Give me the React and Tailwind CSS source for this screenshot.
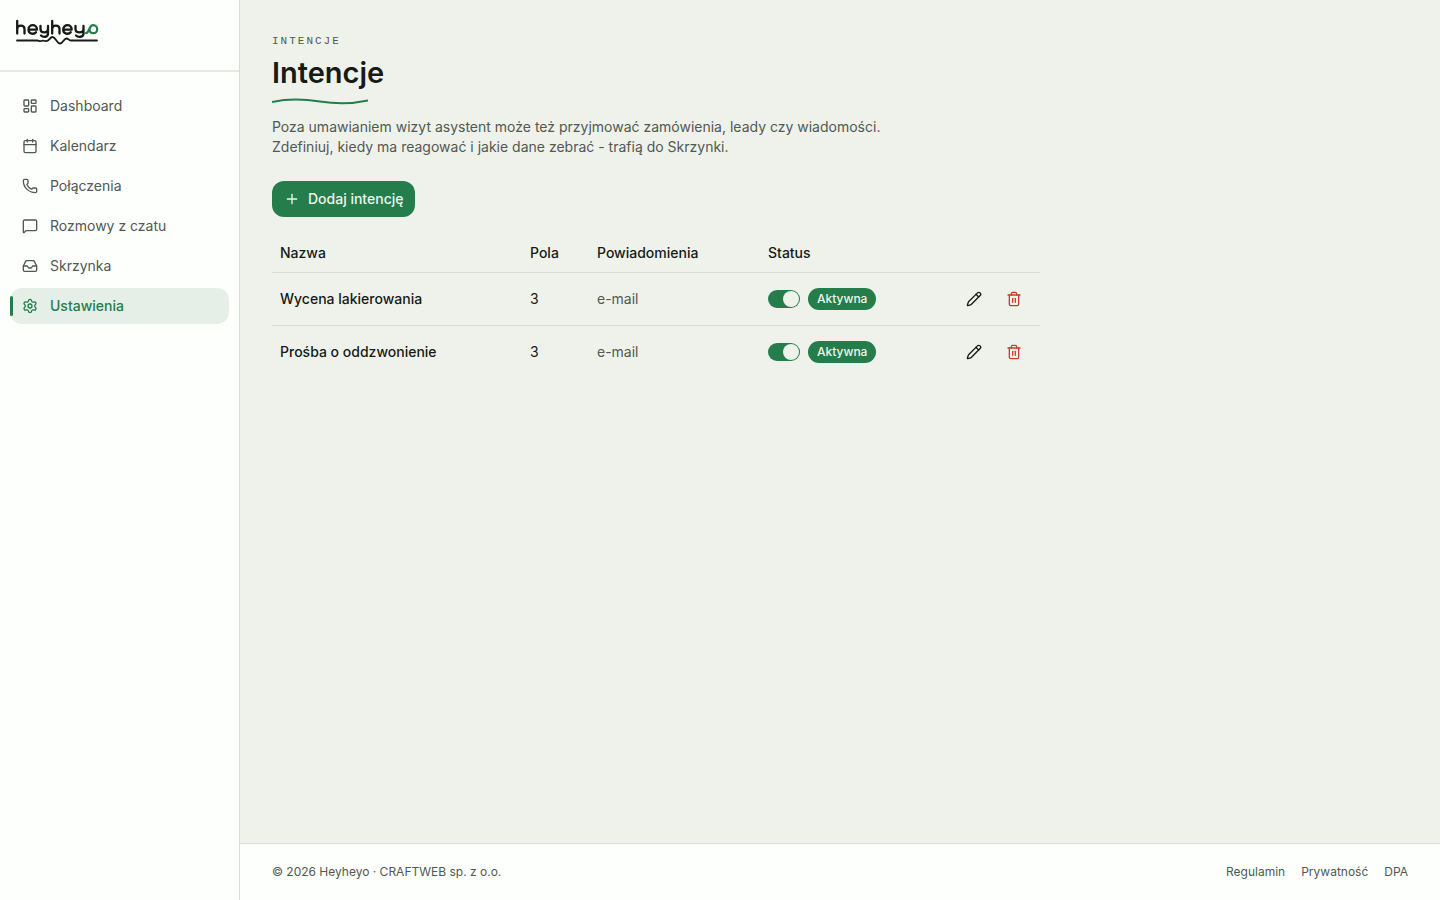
import React from "react";
import {
  Calendar,
  Inbox,
  LayoutDashboard,
  MessageSquare,
  Pencil,
  Phone,
  Plus,
  Settings,
  Trash2,
} from "lucide-react";

const navItems = [
  { label: "Dashboard", icon: LayoutDashboard },
  { label: "Kalendarz", icon: Calendar },
  { label: "Połączenia", icon: Phone },
  { label: "Rozmowy z czatu", icon: MessageSquare },
  { label: "Skrzynka", icon: Inbox },
  { label: "Ustawienia", icon: Settings, active: true },
];

const intents = [
  { name: "Wycena lakierowania", fields: 3, notify: "e-mail" },
  { name: "Prośba o oddzwonienie", fields: 3, notify: "e-mail" },
];

const footerLinks = ["Regulamin", "Prywatność", "DPA"];

// Wordmark with the voice wave underneath
const Logo = () => (
  <svg width="84" height="28" viewBox="0 0 84 28" fill="none" aria-label="heyheyo">
    <g stroke="#171a17" strokeWidth="2.3" strokeLinecap="round" strokeLinejoin="round">
      <path d="M1.200 3v12.500M1.200 11C1.200 6.500 8.500 6.500 8.500 11v4.500" />
      <path d="M12.500 11.700h8.500c0-6-8.500-6-8.500 0 0 4.500 5.500 5 7.500 2.500" />
      <path d="M24.500 8v3c0 4.500 7.500 4.500 7.500 0V8M32 11v4.500c0 4-5 4-7 2" />
      <path d="M36.200 3v12.500M36.200 11c0-4.500 7.300-4.500 7.300 0v4.500" />
      <path d="M47.200 11.700h8.500c0-6-8.500-6-8.500 0 0 4.500 5.500 5 7.500 2.500" />
      <path d="M59.500 8v3c0 4.500 8 4.500 8 0V8M67.500 11v4.500c0 4-5.500 4-7.500 2" />
    </g>
    <path
      d="M70 15.200c3.500 0 2.500-8 7.200-8 5.300 0 5.300 8 0 8-3.500 0-4.200-3-3.200-5.200"
      stroke="#257d4c"
      strokeWidth="2.2"
      strokeLinecap="round"
    />
    <path
      d="M1 22.500h20c2 0 2.500 1 4 .5s2.500-.5 4 0c4 1.500 4.500-4 7.500-4 3.500 0 4 6.500 7.500 6.500s3.500-5 6.500-5c2 0 2 2 4.500 2h26"
      stroke="#171a17"
      strokeWidth="1.8"
      strokeLinecap="round"
    />
  </svg>
);

const Sidebar = () => (
  <aside className="w-60 shrink-0 border-r border-[#d8dcd2] bg-[#fdfffc]">
    <div className="h-18 border-b-2 border-[#e9e9df] px-4 pt-[18px]">
      <a href="#" className="block w-fit">
        <Logo />
      </a>
    </div>
    <nav className="flex flex-col gap-1 px-[10px] py-4">
      {navItems.map(({ label, icon: Icon, active }) => (
        <a
          key={label}
          href="#"
          aria-current={active ? "page" : undefined}
          className={
            active
              ? "relative flex h-9 items-center gap-3 rounded-xl bg-[#e5efe7] px-3 text-sm font-medium text-[#257d4c]"
              : "flex h-9 items-center gap-3 rounded-xl px-3 text-sm text-[#525852]"
          }
        >
          {active && (
            <span className="absolute top-2 bottom-2 left-0 w-[3px] rounded-full bg-[#257d4c]" />
          )}
          <Icon size={16} strokeWidth={2} />
          {label}
        </a>
      ))}
    </nav>
  </aside>
);

const StatusSwitch = ({ name }) => (
  <label className="relative inline-flex h-[18px] w-8 items-center">
    <input
      type="checkbox"
      role="switch"
      defaultChecked
      aria-label={"Aktywna: " + name}
      className="peer absolute inset-0 appearance-none rounded-full bg-[#c9cec6] checked:bg-[#257d4c]"
    />
    <span className="relative ml-px size-4 rounded-full bg-[#eef2ea] peer-checked:ml-[15px]" />
  </label>
);

const IntentsTable = () => (
  <table className="w-full max-w-[768px] table-fixed text-left text-sm text-[#171a17]">
    <thead>
      <tr className="h-10 border-b border-[#d8dcd2]">
        <th className="w-[250px] px-2 pt-0.5 font-medium">Nazwa</th>
        <th className="w-[67px] px-2 pt-0.5 font-medium">Pola</th>
        <th className="w-[171px] px-2 pt-0.5 font-medium">Powiadomienia</th>
        <th className="px-2 pt-0.5 font-medium">Status</th>
        <th className="w-[100px] px-2" aria-label="Akcje" />
      </tr>
    </thead>
    <tbody>
      {intents.map((intent) => (
        <tr
          key={intent.name}
          className="h-[53px] border-b border-[#d8dcd2] last:border-0"
        >
          <td className="px-2 font-medium">{intent.name}</td>
          <td className="px-2">{intent.fields}</td>
          <td className="px-2 text-[#525852]">{intent.notify}</td>
          <td className="px-2">
            <div className="flex items-center gap-2">
              <StatusSwitch name={intent.name} />
              <span className="flex h-[22px] items-center rounded-full bg-[#257d4c] px-[9px] text-xs font-medium text-[#eef6ee]">
                Aktywna
              </span>
            </div>
          </td>
          <td className="px-2">
            <div className="flex justify-end gap-1">
              <button
                type="button"
                aria-label="Edytuj"
                className="flex size-9 items-center justify-center rounded-xl"
              >
                <Pencil size={16} strokeWidth={2} />
              </button>
              <button
                type="button"
                aria-label="Usuń"
                className="flex size-9 items-center justify-center rounded-xl text-[#c8402c]"
              >
                <Trash2 size={16} strokeWidth={2} />
              </button>
            </div>
          </td>
        </tr>
      ))}
    </tbody>
  </table>
);

const App = () => {
  return (
    <div className="flex min-h-screen bg-[#eef2ea] font-['Inter',sans-serif]">
      <Sidebar />
      <div className="flex min-w-0 flex-1 flex-col">
        <main className="flex-1 px-8 pt-8">
          <p className="font-['Liberation_Mono',monospace] text-[11px] leading-[18px] tracking-[2px] text-[#525852] uppercase">
            Intencje
          </p>
          <h1 className="mt-[5px] text-[29px] leading-9 font-semibold text-[#171a17]">
            Intencje
          </h1>
          <svg
            className="mt-[6px]"
            width="96"
            height="8"
            viewBox="0 0 96 8"
            fill="none"
            aria-hidden="true"
          >
            <path
              d="M0 5C16 1.500 32 2 48 4.500S80 7 96 3.500"
              stroke="#257d4c"
              strokeWidth="2"
            />
          </svg>
          <p className="mt-3 max-w-[640px] text-sm leading-5 text-[#525852]">
            Poza umawianiem wizyt asystent może też przyjmować zamówienia, leady
            czy wiadomości. Zdefiniuj, kiedy ma reagować i jakie dane zebrać -
            trafią do Skrzynki.
          </p>
          <button
            type="button"
            className="mt-6 mb-[15px] flex h-9 items-center gap-2 rounded-xl bg-[#257d4c] px-3 text-sm font-medium text-[#eef6ee]"
          >
            <Plus size={16} strokeWidth={2} />
            Dodaj intencję
          </button>
          <IntentsTable />
        </main>
        <footer className="flex items-center justify-between border-t border-[#d8dcd2] bg-[#fdfffc] px-8 py-5 text-xs text-[#525852]">
          <span>© 2026 Heyheyo · CRAFTWEB sp. z o.o.</span>
          <nav className="flex gap-4">
            {footerLinks.map((link) => (
              <a key={link} href="#">
                {link}
              </a>
            ))}
          </nav>
        </footer>
      </div>
    </div>
  );
};

export default App;
